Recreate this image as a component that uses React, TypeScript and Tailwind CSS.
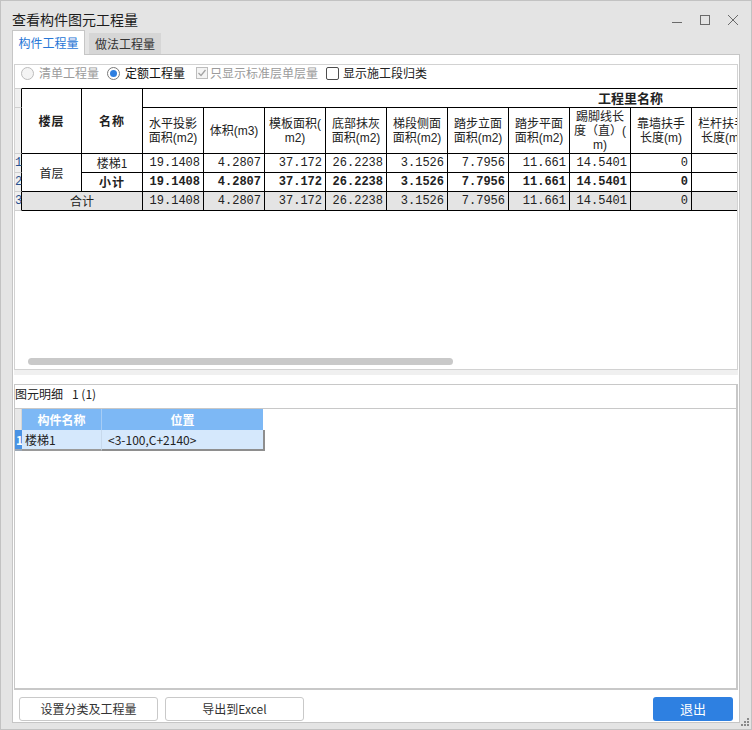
import React from "react";

const ui = "font-['Noto_Sans_CJK_SC',sans-serif]";
const mono = "font-['Liberation_Mono',monospace]";
const head = "font-['Liberation_Sans','Noto_Sans_CJK_SC',sans-serif]";

const heads: string[][] = [
  ["水平投影", "面积(m2)"],
  ["体积(m3)"],
  ["模板面积(", "m2)"],
  ["底部抹灰", "面积(m2)"],
  ["梯段侧面", "面积(m2)"],
  ["踏步立面", "面积(m2)"],
  ["踏步平面", "面积(m2)"],
  ["踢脚线长", "度（直）(", "m)"],
  ["靠墙扶手", "长度(m)"],
  ["栏杆扶手", "长度(m)"],
  [], [], [], [], [], [],
];

const values = [
  "19.1408", "4.2807", "37.172", "26.2238", "3.1526", "7.7956", "11.661", "14.5401", "0",
  "", "", "", "", "", "", "",
];

function TitleBar() {
  return (
    <div className="h-[30px] flex justify-between">
      <div className="pl-[12px] pt-[8px] text-[14px] leading-[22px] text-[#1c1c1c]">查看构件图元工程量</div>
      <svg width="68" height="12" viewBox="0 0 68 12" className="mt-[14px] mr-[13px]" fill="none" stroke="#6a6a6a">
        <line x1="1" y1="8.5" x2="11" y2="8.5" />
        <rect x="29.5" y="1.5" width="9" height="9" />
        <line x1="57" y1="1" x2="67" y2="11" />
        <line x1="67" y1="1" x2="57" y2="11" />
      </svg>
    </div>
  );
}

function Tabs() {
  return (
    <div className="h-[24px] flex items-end pl-[12px]">
      <div className="relative z-10 -mb-px w-[73px] h-[25px] bg-white border border-b-0 border-[#c6c6c6] flex items-center justify-center text-[#2776d6] pb-[1px]">
        构件工程量
      </div>
      <div className="ml-[4px] w-[72px] h-[21px] bg-[#d6d6d6] flex items-center justify-center text-[#333]">
        做法工程量
      </div>
    </div>
  );
}

function Options() {
  return (
    <div className="h-[23px] flex items-center pb-[7px] pl-[6px]">
      <span className="w-[13px] h-[13px] rounded-full border border-[#bcbcbc] bg-[#f4f4f4]" />
      <span className="ml-[5px] text-[#9b9b9b]">清单工程量</span>
      <span className="ml-[8px] w-[13px] h-[13px] rounded-full border border-[#7a7a7a] bg-white flex items-center justify-center">
        <span className="w-[7px] h-[7px] rounded-full bg-[#2d7ee0]" />
      </span>
      <span className="ml-[5px] text-[#111]">定额工程量</span>
      <span className="ml-[11px] w-[12px] h-[12px] border border-[#bdbdbd] bg-[#f4f4f4] flex items-center justify-center">
        <svg width="10" height="10" viewBox="0 0 10 10" fill="none" stroke="#a3a3a3" strokeWidth="1.3">
          <polyline points="1.5,5 4,7.5 8.5,2" />
        </svg>
      </span>
      <span className="ml-[2px] text-[#9b9b9b]">只显示标准层单层量</span>
      <span className="ml-[8px] w-[13px] h-[13px] rounded-[2px] border border-[#4d4d4d] bg-white" />
      <span className="ml-[4px] text-[#222]">显示施工段归类</span>
    </div>
  );
}

function QtyTable() {
  const cell = "border-r border-b border-black";
  const rn = "border-r border-b border-r-black border-b-[#cfcfcf] bg-[#f0f0f0] text-[#27508f] leading-[18px] " + mono;
  return (
    <div className="w-full overflow-hidden">
      <div className="grid w-max grid-cols-[7px_60px_61px_repeat(16,61px)] grid-rows-[20px_46px_19px_19px_19px]">
        <div className={rn + " border-t border-t-[#cfcfcf]"} />
        <div className={cell + " border-t row-span-2 flex items-center justify-center font-bold tracking-[1px]"}>楼层</div>
        <div className={cell + " border-t row-span-2 flex items-center justify-center font-bold tracking-[1px]"}>名称</div>
        <div className={cell + " border-t col-span-16 flex items-center justify-center text-[13px] font-bold"}>工程里名称</div>

        <div className={rn} />
        {heads.map((h, i) => (
          <div key={i} className={cell + " flex flex-col items-center justify-center leading-[14px] whitespace-nowrap overflow-hidden " + head}>
            {h.map((l, j) => (
              <span key={j}>{l}</span>
            ))}
          </div>
        ))}

        <div className={rn}>1</div>
        <div className={cell + " row-span-2 flex items-center justify-center"}>首层</div>
        <div className={cell + " flex items-center justify-center"}>楼梯1</div>
        {values.map((v, i) => (
          <div key={i} className={cell + " text-right pr-[3px] leading-[18px] " + mono}>{v}</div>
        ))}

        <div className={rn}>2</div>
        <div className={cell + " flex items-center justify-center font-bold tracking-[1px]"}>小计</div>
        {values.map((v, i) => (
          <div key={i} className={cell + " text-right pr-[3px] leading-[18px] font-bold " + mono}>{v}</div>
        ))}

        <div className={rn + " bg-[#e4e4e4]"}>3</div>
        <div className={cell + " col-span-2 bg-[#e4e4e4] flex items-center justify-center"}>合计</div>
        {values.map((v, i) => (
          <div key={i} className={cell + " bg-[#e4e4e4] text-right pr-[3px] leading-[18px] " + mono}>{v}</div>
        ))}
      </div>
    </div>
  );
}

function DetailPanel() {
  return (
    <div className="mx-px h-[306px] border border-r-2 border-b-2 border-[#c8c8c8] flex flex-col">
      <div className="h-[24px] border-b border-[#c8c8c8] leading-[18px] text-[#222]">
        图元明细<span className="ml-[9px]">1 (1)</span>
      </div>
      <div className="grid w-max grid-cols-[7px_80px_163px] grid-rows-[21px_21px]">
        <div className="bg-[#e8e8e8] border-r border-[#d6d6d6]" />
        <div className="bg-[#7db8f5] border-r border-[#a6cdf6] flex items-center justify-center text-white font-bold">构件名称</div>
        <div className="bg-[#7db8f5] border-r-2 border-r-white flex items-center justify-center text-white font-bold">位置</div>
        <div className="bg-[#4a93e4] text-white font-bold leading-[19px] pl-px border-b-2 border-[#9aa7b5]">1</div>
        <div className="bg-[#d5e8fc] border-r border-r-[#c7d9ec] border-b-2 border-b-[#9a9a9a] pl-[3px] leading-[19px]">楼梯1</div>
        <div className="bg-[#d5e8fc] border-r-2 border-b-2 border-[#8e8e8e] pl-[6px] leading-[19px]">&lt;3-100,C+2140&gt;</div>
      </div>
    </div>
  );
}

function Buttons() {
  return (
    <div className="flex items-start pt-[7px] px-[6px]">
      <button className="w-[139px] h-[24px] border border-[#c9c9c9] rounded-[3px] bg-white text-[#333]">设置分类及工程量</button>
      <button className="ml-[7px] w-[139px] h-[24px] border border-[#c9c9c9] rounded-[3px] bg-white text-[#333]">导出到Excel</button>
      <button className="ml-auto w-[80px] h-[24px] rounded-[3px] bg-[#2e80e1] text-white text-[13px]">退出</button>
    </div>
  );
}

export default function App() {
  return (
    <div className={"relative w-[752px] h-[730px] overflow-hidden bg-[#e4e4e4] shadow-[inset_0_0_0_1px_#c2c2c2] text-[12px] text-[#222] " + ui}>
      <TitleBar />
      <Tabs />
      <div className="ml-[12px] w-[728px] h-[669px] border border-[#c6c6c6] bg-white flex flex-col">
        <div className="mt-[9px] mx-px h-[306px] border border-[#d2d2d2] flex flex-col">
          <Options />
          <QtyTable />
          <div className="flex-1" />
          <div className="h-[7px] mb-[4px] ml-[13px] w-[425px] rounded-full bg-[#c9c9c9]" />
        </div>
        <div className="mx-px h-[5px] bg-[#f0f0f0]" />
        <div className="h-[9px]" />
        <DetailPanel />
        <Buttons />
      </div>
      <svg width="9" height="9" viewBox="0 0 9 9" className="absolute right-[3px] bottom-[4px]" fill="#8a8a8a">
        <rect x="7" y="1" width="2" height="2" />
        <rect x="4" y="4" width="2" height="2" />
        <rect x="7" y="4" width="2" height="2" />
        <rect x="1" y="7" width="2" height="2" />
        <rect x="4" y="7" width="2" height="2" />
        <rect x="7" y="7" width="2" height="2" />
      </svg>
    </div>
  );
}
